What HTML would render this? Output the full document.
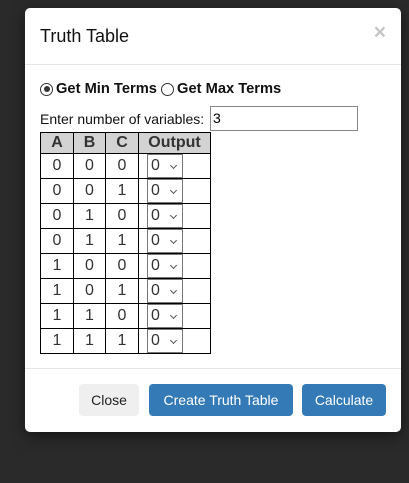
<!DOCTYPE html>
<html><head><style>
body{margin:0;width:409px;height:483px;background:#2a2a2a;font-family:"Liberation Sans",Arial,sans-serif;position:relative;overflow:hidden}
.m{position:absolute;left:25px;top:8px;width:376px;height:424px;background:#fff;border-radius:5px;box-shadow:0 4px 14px rgba(0,0,0,.5)}
.t{position:absolute;left:15px;top:18px;font-size:18px;color:#111}
.x{position:absolute;right:15px;top:13px;font-size:21px;font-weight:bold;color:#c4c4c4}
.hl{position:absolute;left:0;right:0;top:56px;border-top:1px solid #e5e5e5}
.fl{position:absolute;left:0;right:0;top:360px;border-top:1px solid #e5e5e5}
.r{position:absolute;left:15px;top:73px;font-size:14.7px;font-weight:bold;color:#111;display:flex;align-items:center}
.rd{width:13px;height:13px;border:1px solid #333;border-radius:50%;display:inline-block;margin-right:3px;position:relative;box-sizing:border-box}
.rd.on:after{content:"";position:absolute;left:2.5px;top:2.5px;width:6px;height:6px;border-radius:50%;background:#333}
.lb{position:absolute;left:15px;top:103px;font-size:14px;color:#111}
.in{position:absolute;left:185px;top:98px;width:148px;height:25px;border:1px solid #888;box-sizing:border-box;font-size:14px;padding:3px 2px}
table{position:absolute;left:15px;top:124px;border-collapse:collapse;font-size:16px;color:#333}
td,th{border:1px solid #000;padding:0;text-align:center;line-height:18px}
th{background:#d3d3d3;height:20px;font-size:16px}
td{height:24px}
.s{display:inline-block;width:36px;height:24px;border:1px solid #777;box-sizing:border-box;text-align:left;padding-left:3px;line-height:22px;position:relative;margin-left:-19px;vertical-align:middle}
.s:after{content:"";position:absolute;right:6px;top:8px;width:4px;height:4px;border-right:1px solid #555;border-bottom:1px solid #555;transform:rotate(45deg)}
.b{position:absolute;top:376px;height:32px;border-radius:4px;font-size:14px;line-height:32px;text-align:center;color:#fff;background:#337ab7}
</style></head><body>
<div class="m">
<div class="t">Truth Table</div><div class="x">×</div>
<div class="hl"></div>
<div class="r"><span class="rd on"></span>Get Min Terms&nbsp;<span class="rd"></span>Get Max Terms</div>
<div class="lb">Enter number of variables:</div>
<div class="in">3</div>
<table>
<tr><th style="width:32px">A</th><th style="width:31px">B</th><th style="width:32px">C</th><th style="width:71px">Output</th></tr>
<tr><td>0</td><td>0</td><td>0</td><td><span class="s">0</span></td></tr>
<tr><td>0</td><td>0</td><td>1</td><td><span class="s">0</span></td></tr>
<tr><td>0</td><td>1</td><td>0</td><td><span class="s">0</span></td></tr>
<tr><td>0</td><td>1</td><td>1</td><td><span class="s">0</span></td></tr>
<tr><td>1</td><td>0</td><td>0</td><td><span class="s">0</span></td></tr>
<tr><td>1</td><td>0</td><td>1</td><td><span class="s">0</span></td></tr>
<tr><td>1</td><td>1</td><td>0</td><td><span class="s">0</span></td></tr>
<tr><td>1</td><td>1</td><td>1</td><td><span class="s">0</span></td></tr>
</table>
<div class="fl"></div>
<div class="b" style="left:54px;width:60px;background:#efefef;color:#222">Close</div>
<div class="b" style="left:124px;width:144px">Create Truth Table</div>
<div class="b" style="left:277px;width:84px">Calculate</div>
</div>
</body></html>
